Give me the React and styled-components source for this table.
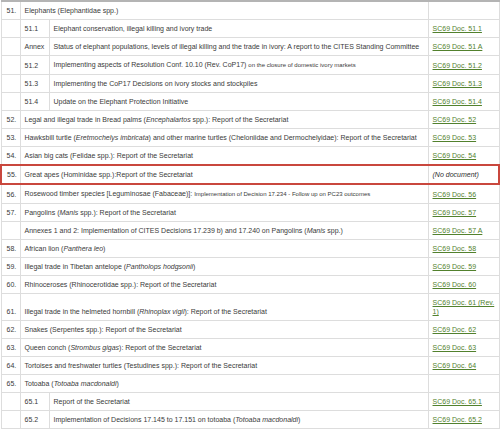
import React from "react"
import styled, { createGlobalStyle, css } from "styled-components"

const GlobalStyle = createGlobalStyle`
  html, body {
    margin: 0;
    padding: 0;
    background: #fff;
  }
  body {
    font-family: "Liberation Sans", Arial, sans-serif;
  }
`

const Table = styled.table`
  width: 498px;
  border-collapse: collapse;
  table-layout: fixed;
  font-size: 7px;
  line-height: 9px;
  color: #3a3a3a;
  border-top: 2px solid #b4b4b4;
`

const Col = styled.col`
  width: ${(p) => p.$w}px;
`

const Row = styled.tr`
  ${(p) =>
    p.$flag &&
    css`
      & > td {
        border-top: 2px solid #c9473d;
        border-bottom: 2px solid #c9473d;
      }
      & > td:first-child {
        border-left: 2px solid #c9473d;
      }
      & > td:last-child {
        border-right: 2px solid #c9473d;
      }
    `}
`

const Cell = styled.td`
  border: 1px solid #dddddd;
  padding: 4px 3px 4px ${(p) => p.$pl || 4}px;
  vertical-align: bottom;
  overflow: hidden;
  height: 9px;
`

const Small = styled.span`
  font-size: 6px;
`

const DocLink = styled.a`
  color: #52812d;
  text-decoration: underline;
`

const NoDoc = styled.em`
  color: #2e2e2e;
`

const rows = [
  { num: "51.", text: <>Elephants (Elephantidae spp.)</> },
  { sub: "51.1", text: <>Elephant conservation, illegal killing and ivory trade</>, doc: "SC69 Doc. 51.1" },
  {
    sub: "Annex",
    text: <>Status of elephant populations, levels of illegal killing and the trade in ivory: A report to the CITES Standing Committee</>,
    doc: "SC69 Doc. 51 A",
  },
  {
    sub: "51.2",
    text: (
      <>
        Implementing aspects of Resolution Conf. 10.10 (Rev. CoP17) <Small>on the closure of domestic ivory markets</Small>
      </>
    ),
    doc: "SC69 Doc. 51.2",
  },
  { sub: "51.3", text: <>Implementing the CoP17 Decisions on ivory stocks and stockpiles</>, doc: "SC69 Doc. 51.3" },
  { sub: "51.4", text: <>Update on the Elephant Protection Initiative</>, doc: "SC69 Doc. 51.4" },
  {
    num: "52.",
    text: <>Legal and illegal trade in Bread palms (<i>Encephalartos</i> spp.): Report of the Secretariat</>,
    doc: "SC69 Doc. 52",
  },
  {
    num: "53.",
    text: (
      <>
        Hawksbill turtle (<i>Eretmochelys imbricata</i>) and other marine turtles (Cheloniidae and Dermochelyidae): Report of the Secretariat
      </>
    ),
    doc: "SC69 Doc. 53",
  },
  { num: "54.", text: <>Asian big cats (Felidae spp.): Report of the Secretariat</>, doc: "SC69 Doc. 54" },
  { num: "55.", text: <>Great apes (Hominidae spp.):Report of the Secretariat</>, none: true, flag: true },
  {
    num: "56.",
    text: (
      <>
        Rosewood timber species [Leguminosae (Fabaceae)]: <Small>Implementation of Decision 17.234 - Follow up on PC23 outcomes</Small>
      </>
    ),
    doc: "SC69 Doc. 56",
  },
  { num: "57.", text: <>Pangolins (<i>Manis</i> spp.): Report of the Secretariat</>, doc: "SC69 Doc. 57" },
  {
    num: "",
    text: <>Annexes 1 and 2: Implementation of CITES Decisions 17.239 b) and 17.240 on Pangolins (<i>Manis</i> spp.)</>,
    doc: "SC69 Doc. 57 A",
  },
  { num: "58.", text: <>African lion (<i>Panthera leo</i>)</>, doc: "SC69 Doc. 58" },
  { num: "59.", text: <>Illegal trade in Tibetan antelope (<i>Pantholops hodgsonii</i>)</>, doc: "SC69 Doc. 59" },
  { num: "60.", text: <>Rhinoceroses (Rhinocerotidae spp.): Report of the Secretariat</>, doc: "SC69 Doc. 60" },
  {
    num: "61.",
    text: <>Illegal trade in the helmeted hornbill (<i>Rhinoplax vigil</i>): Report of the Secretariat</>,
    doc: "SC69 Doc. 61 (Rev. 1)",
  },
  { num: "62.", text: <>Snakes (Serpentes spp.): Report of the Secretariat</>, doc: "SC69 Doc. 62" },
  { num: "63.", text: <>Queen conch (<i>Strombus gigas</i>): Report of the Secretariat</>, doc: "SC69 Doc. 63" },
  { num: "64.", text: <>Tortoises and freshwater turtles (Testudines spp.): Report of the Secretariat</>, doc: "SC69 Doc. 64" },
  { num: "65.", text: <>Totoaba (<i>Totoaba macdonaldi</i>)</> },
  { sub: "65.1", text: <>Report of the Secretariat</>, doc: "SC69 Doc. 65.1" },
  {
    sub: "65.2",
    text: <>Implementation of Decisions 17.145 to 17.151 on totoaba (<i>Totoaba macdonaldi</i>)</>,
    doc: "SC69 Doc. 65.2",
  },
  // next row continues below the fold; only its grid lines show
  { num: "", text: null },
]

const DocCell = ({ row }) => (
  <Cell>
    {row.none ? <NoDoc>(No document)</NoDoc> : row.doc ? <DocLink href="#">{row.doc}</DocLink> : null}
  </Cell>
)

const AgendaRow = ({ row }) => (
  <Row $flag={row.flag}>
    {row.sub ? (
      <>
        <Cell />
        <Cell>{row.sub}</Cell>
        <Cell>{row.text}</Cell>
      </>
    ) : (
      <>
        <Cell $pl={5}>{row.num}</Cell>
        <Cell colSpan={2}>{row.text}</Cell>
      </>
    )}
    <DocCell row={row} />
  </Row>
)

const App = () => {
  return (
    <>
      <GlobalStyle />
      <Table>
        <colgroup>
          <Col $w={19} />
          <Col $w={29} />
          <Col $w={379} />
          <Col $w={71} />
        </colgroup>
        <tbody>
          {rows.map((row, i) => (
            <AgendaRow key={i} row={row} />
          ))}
        </tbody>
      </Table>
    </>
  )
}

export default App
